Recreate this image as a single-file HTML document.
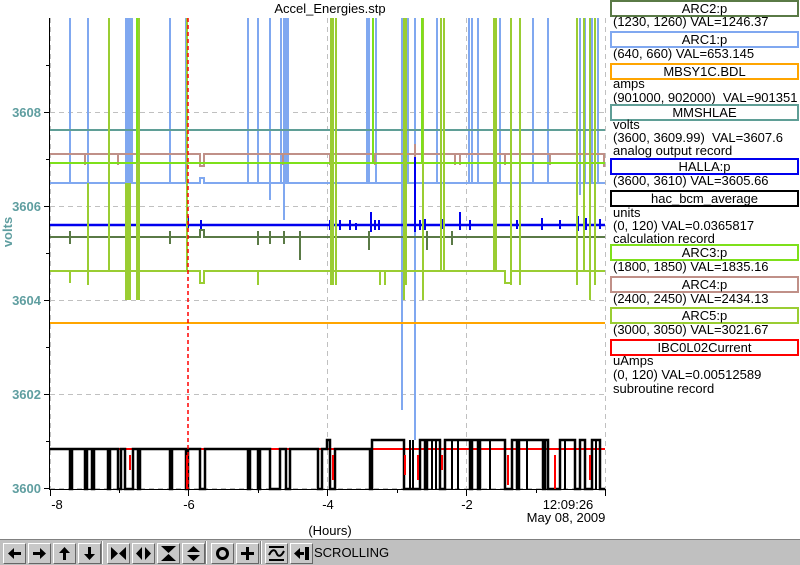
<!DOCTYPE html>
<html><head><meta charset="utf-8"><style>
html,body{margin:0;padding:0;background:#fff;}
body{width:800px;height:564px;position:relative;overflow:hidden;font-family:"Liberation Sans",sans-serif;}
svg{position:absolute;left:0;top:0;}
.lg{position:absolute;left:610px;width:185px;height:13px;border:2px solid;font-size:13px;line-height:13px;text-align:center;color:#000;background:#fff;}
.lt{position:absolute;left:613px;font-size:13px;line-height:13px;color:#000;white-space:pre;}
.tb{position:absolute;left:0;top:539px;width:800px;height:25px;background:#c0c0c0;border-top:1px solid #808080;}
.bt{position:absolute;top:3px;width:21px;height:19px;background:#c8c8c8;border:1px solid;border-color:#fff #666 #666 #fff;}
.sep{position:absolute;top:1px;width:1px;height:23px;background:#808080;border-right:1px solid #fff;}
</style></head><body>
<svg width="800" height="564" viewBox="0 0 800 564">
<text x="330" y="13" font-size="13" text-anchor="middle" font-family="Liberation Sans" fill="#000">Accel_Energies.stp</text>
<g stroke="#c0c0c0" stroke-dasharray="5,4" stroke-width="1">
<line x1="50" y1="112.5" x2="605" y2="112.5"/><line x1="50" y1="206.5" x2="605" y2="206.5"/>
<line x1="50" y1="300.5" x2="605" y2="300.5"/><line x1="50" y1="394.5" x2="605" y2="394.5"/>
<line x1="50" y1="488.5" x2="605" y2="488.5"/>
<line x1="50.5" y1="18" x2="50.5" y2="489"/><line x1="327.5" y1="18" x2="327.5" y2="489"/>
<line x1="466.5" y1="18" x2="466.5" y2="489"/><line x1="605.5" y1="18" x2="605.5" y2="489"/>
</g>
<g stroke="#80a8f0" stroke-width="2">
<path d="M70 18V183M88 18V183M126 18V183M128 18V183M130 18V183M132 18V183M139 18V183M170 18V183M186 18V183M248 18V183M258 18V183M270 18V200M281 18V183M284 18V220M286 18V183M288 18V183M333 18V183M367 18V183M369 18V183M376 18V183M402 18V410M405 18V183M408 18V183M415 18V440M437 18V183M441 18V183M469 18V183M472 18V183M478 18V183M500 18V183M533 18V183M548 18V183M580 18V195M585 18V183M592 18V183M598 18V183"/>
</g>
<line x1="50" y1="130" x2="605" y2="130" stroke="#5f9e96" stroke-width="2"/>
<path d="M50 154H200V166H204V154H605" stroke="#c09088" stroke-width="2" fill="none"/>
<g stroke="#c09088" stroke-width="2"><path d="M85 154V165M118 154V165M138 154V165M283 154V165M330 154V165M333 154V165M375 154V165M415 144V160M455 154V165M460 154V165M505 154V165M550 154V165M590 154V165M604 154V167"/></g>
<path d="M50 163H605" stroke="#7ee01a" stroke-width="2" fill="none"/>
<path d="M50 183H200V178H204V183H605" stroke="#80a8f0" stroke-width="2" fill="none"/>
<path d="M50 225H605" stroke="#0000ee" stroke-width="2.5" fill="none"/>
<g stroke="#0000ee" stroke-width="2"><path d="M126 220V230M188 216V228M201 220V229M330 220V230M336 220V230M340 220V230M350 220V230M356 223V230M371 212V232M375 220V230M379 220V230M415 157V232M420 220V230M425 219V230M443 219V229M460 212V230M470 220V230M517 220V229M542 218V230M560 220V229M578 216V231M586 218V230M600 219V229"/></g>
<path d="M50 237H200V230H204V237H605" stroke="#5a7a46" stroke-width="2" fill="none"/>
<g stroke="#5a7a46" stroke-width="2"><path d="M70 231V244M88 231V244M126 231V250M130 231V245M139 231V250M170 231V244M258 231V245M270 231V244M284 231V244M300 231V260M333 231V244M336 231V250M369 231V250M404 231V250M427 231V250M452 231V245M494 231V244M511 231V248M520 231V244M577 231V248M584 231V244"/></g>
<g stroke="#9acd32" stroke-width="2">
<path d="M109 18V271M126 183V300M128 183V300M130 183V300M137 18V300M139 18V300M187 18V271M331 18V285M333 18V285M336 18V285M404 18V300M406 18V285M423 18V300M441 18V271M444 18V271M494 18V271M496 18V271M511 18V285M520 18V285M577 18V285M584 18V271M590 18V300M595 18V285M88 183V285M70 271V283M258 271V285M380 271V285M385 271V285"/>
<path d="M50 271H200V283H204V271H505V283H511V271H605" fill="none"/>
</g>
<g stroke="#7ee01a" stroke-width="2"><path d="M373 18V163M422 18V163M137 18V163"/></g>
<line x1="50" y1="323" x2="605" y2="323" stroke="#ffa500" stroke-width="2"/>
<path d="M50 449H605" stroke="#ff0000" stroke-width="2" fill="none"/>
<path d="M50 449H70V489H72V449H85V489H87V449H92V489H94V449H108V489H110V449H118V489H121V449H125V489H133V449H138V489H140V449H170V489H172V449H186V489H188V449H200V489H205V449H248V489H250V449H258V489H260V449H270V489H280V449H286V489H290V449H318V489H322V449H327V440H330V489H335V449H370V489H372V440H404V489H420V440H425V489H427V440H440V489H445V440H470V489H472V440H478V489H480V440H505V489H512V440H517V489H519V440H543V489H545V440H548V489H560V440H575V489H580V440H585V489H592V440H600V489H605" stroke="#000" stroke-width="2.5" fill="none"/>
<g stroke="#000" stroke-width="2"><path d="M410 440V489M413 440V489M432 440V489M436 440V489M452 440V489M458 440V489M490 440V489M527 440V489M565 440V489M596 440V489"/></g>
<g stroke="#ff0000" stroke-width="2"><path d="M130 455V470M187 455V489M333 455V480M405 455V475M418 455V480M442 455V470M508 455V485M555 455V489M590 455V480"/></g>
<line x1="188" y1="18" x2="188" y2="489" stroke="#ff0000" stroke-width="1.5" stroke-dasharray="4,3"/>
<line x1="49.5" y1="18" x2="49.5" y2="490" stroke="#000"/>
<line x1="49" y1="489.5" x2="606" y2="489.5" stroke="#000"/>
<g stroke="#000"><path d="M44 112.5H49M44 206.5H49M44 300.5H49M44 394.5H49M44 488.5H49M46 65.5H49M46 159.5H49M46 253.5H49M46 347.5H49M46 441.5H49"/>
<path d="M50.5 490V496M188.5 490V496M327.5 490V496M466.5 490V496M605.5 490V496M119.5 490V493M258.5 490V493M397.5 490V493M536.5 490V493"/></g>
<g font-size="13" font-weight="bold" fill="#5f9ea0" font-family="Liberation Sans" text-anchor="end">
<text x="41" y="117">3608</text><text x="41" y="211">3606</text><text x="41" y="305">3604</text><text x="41" y="399">3602</text><text x="41" y="493">3600</text>
<text transform="translate(12,232) rotate(-90)" text-anchor="middle">volts</text></g>
<g font-size="13" fill="#000" font-family="Liberation Sans" text-anchor="middle">
<text x="57" y="509">-8</text><text x="189" y="509">-6</text><text x="328" y="509">-4</text><text x="467" y="509">-2</text>
<text x="568" y="509">12:09:26</text><text x="566" y="522">May 08, 2009</text><text x="330" y="535">(Hours)</text></g>
</svg>
<div class="lg" style="top:0;border-color:#5a7a46">ARC2:p</div><div class="lt" style="top:15px">(1230, 1260) VAL=1246.37</div>
<div class="lg" style="top:31px;border-color:#80a8f0">ARC1:p</div><div class="lt" style="top:47px">(640, 660) VAL=653.145</div>
<div class="lg" style="top:63px;border-color:#ffa500">MBSY1C.BDL</div><div class="lt" style="top:77px">amps</div><div class="lt" style="top:91px">(901000, 902000)  VAL=901351</div>
<div class="lg" style="top:104px;border-color:#5f9e96">MMSHLAE</div><div class="lt" style="top:118px">volts</div><div class="lt" style="top:131px">(3600, 3609.99)  VAL=3607.6</div><div class="lt" style="top:144px">analog output record</div>
<div class="lg" style="top:158px;border-color:#0000ee">HALLA:p</div><div class="lt" style="top:174px">(3600, 3610) VAL=3605.66</div>
<div class="lg" style="top:190px;border-color:#000">hac_bcm_average</div><div class="lt" style="top:206px">units</div><div class="lt" style="top:219px">(0, 120) VAL=0.0365817</div><div class="lt" style="top:232px">calculation record</div>
<div class="lg" style="top:244px;border-color:#7ee01a">ARC3:p</div><div class="lt" style="top:260px">(1800, 1850) VAL=1835.16</div>
<div class="lg" style="top:276px;border-color:#c09088">ARC4:p</div><div class="lt" style="top:292px">(2400, 2450) VAL=2434.13</div>
<div class="lg" style="top:307px;border-color:#9acd32">ARC5:p</div><div class="lt" style="top:323px">(3000, 3050) VAL=3021.67</div>
<div class="lg" style="top:339px;border-color:#ff0000">IBC0L02Current</div><div class="lt" style="top:354px">uAmps</div><div class="lt" style="top:368px">(0, 120) VAL=0.00512589</div><div class="lt" style="top:382px">subroutine record</div>
<div class="tb">
<div class="bt" style="left:3px"><svg width="21" height="19"><path d="M4 9.5L10 4V8H17V11H10V15Z" fill="#000"/></svg></div>
<div class="bt" style="left:28px"><svg width="21" height="19"><path d="M17 9.5L11 4V8H4V11H11V15Z" fill="#000"/></svg></div>
<div class="bt" style="left:53px"><svg width="21" height="19"><path d="M10.5 3L16 9H12V16H9V9H5Z" fill="#000"/></svg></div>
<div class="bt" style="left:78px"><svg width="21" height="19"><path d="M10.5 16L16 10H12V3H9V10H5Z" fill="#000"/></svg></div>
<div class="sep" style="left:101px"></div>
<div class="bt" style="left:107px"><svg width="21" height="19"><path d="M3 3L10 9.5L3 16ZM18 3L11 9.5L18 16Z" fill="#000"/></svg></div>
<div class="bt" style="left:132px"><svg width="21" height="19"><path d="M9 3L3 9.5L9 16ZM12 3L18 9.5L12 16Z" fill="#000"/></svg></div>
<div class="bt" style="left:157px"><svg width="21" height="19"><path d="M3 2H18L10.5 9ZM3 17H18L10.5 10Z" fill="#000"/></svg></div>
<div class="bt" style="left:182px"><svg width="21" height="19"><path d="M4 8L10.5 2L17 8ZM4 11L10.5 17L17 11Z" fill="#000"/></svg></div>
<div class="sep" style="left:205px"></div>
<div class="bt" style="left:211px"><svg width="21" height="19"><circle cx="10.5" cy="9.5" r="5" fill="none" stroke="#000" stroke-width="3"/></svg></div>
<div class="bt" style="left:236px"><svg width="21" height="19"><path d="M9 3H12V8H17V11H12V16H9V11H4V8H9Z" fill="#000"/></svg></div>
<div class="sep" style="left:260px"></div>
<div class="bt" style="left:265px"><svg width="21" height="19"><path d="M3 3H18M3 16H18M3 11C6 5 9 5 10.5 9S15 13 18 7" stroke="#000" stroke-width="2" fill="none"/></svg></div>
<div class="bt" style="left:290px"><svg width="21" height="19"><path d="M3 9.5L9 4V8H13V11H9V15ZM14 3H18V16H14Z" fill="#000"/></svg></div>
<div style="position:absolute;left:314px;top:5px;font-size:13px;color:#000">SCROLLING</div>
</div>
</body></html>
